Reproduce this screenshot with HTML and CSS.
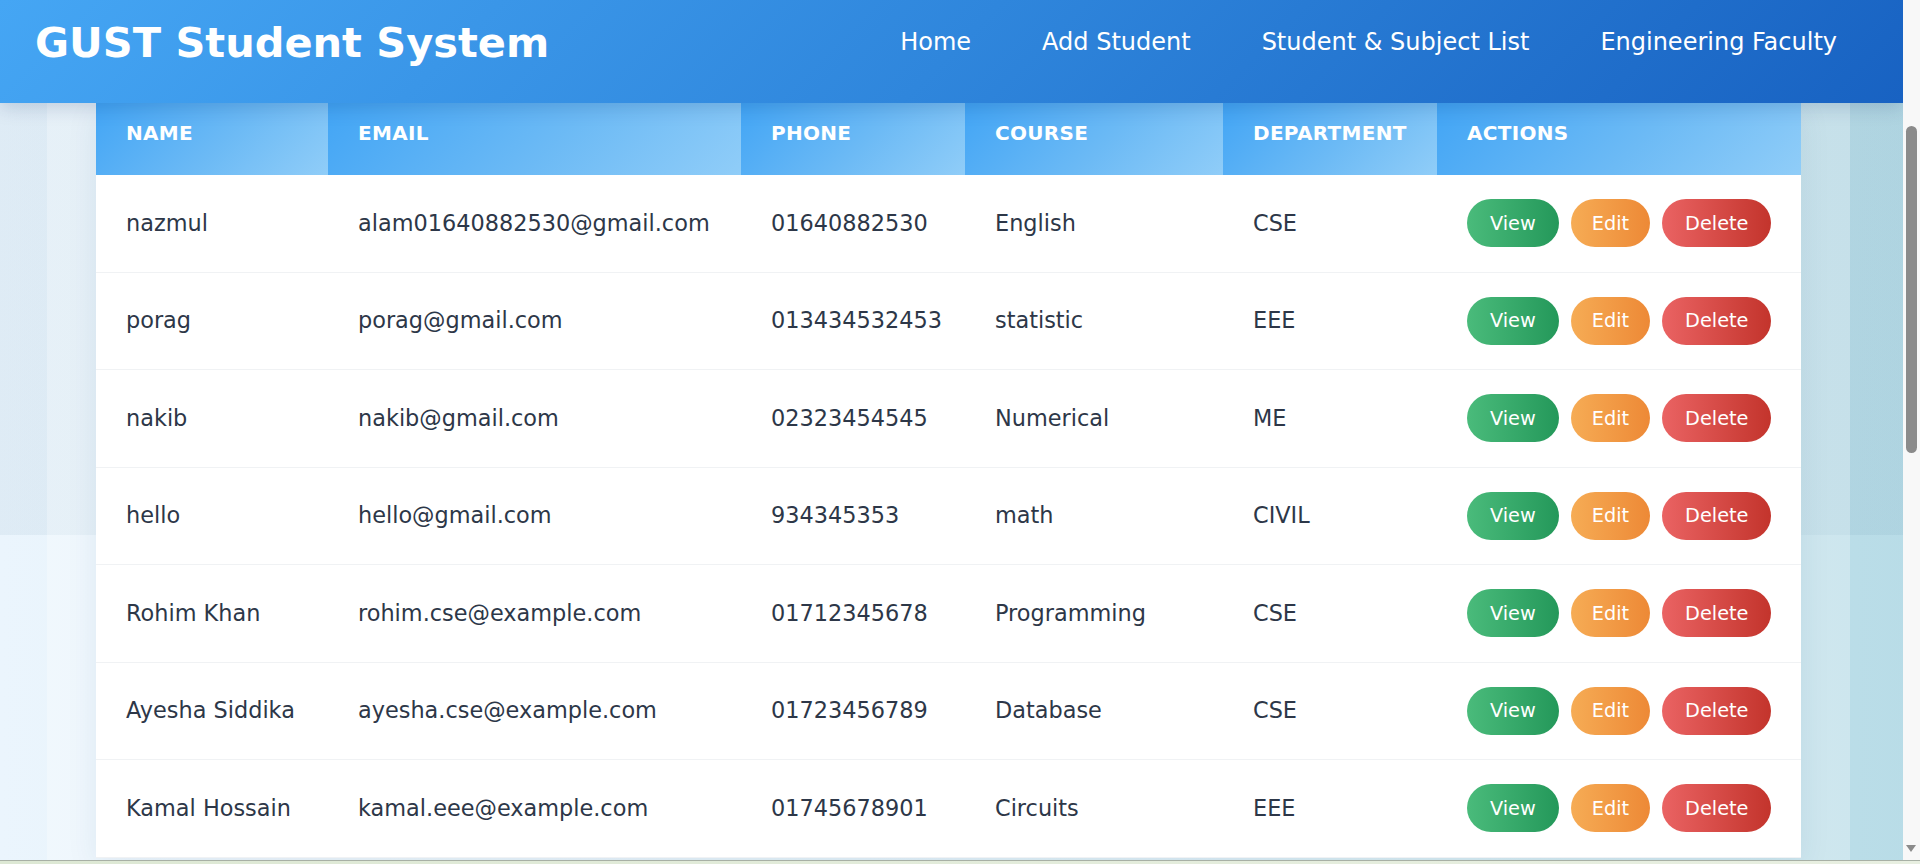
FILE: index.html
```html
<!DOCTYPE html>
<html lang="en">
<head>
<meta charset="utf-8">
<title>GUST Student System</title>
<link rel="stylesheet" href="styles.css">
</head>
<body>
<header class="topbar">
  <h1 class="brand">GUST Student System</h1>
  <nav class="nav">
    <a href="#" class="nav-link">Home</a>
    <a href="#" class="nav-link">Add Student</a>
    <a href="#" class="nav-link">Student &amp; Subject List</a>
    <a href="#" class="nav-link">Engineering Faculty</a>
  </nav>
</header>
<main class="page">
  <section class="panel">
    <table class="students">
      <thead>
        <tr>
          <th class="c-name">Name</th>
          <th class="c-email">Email</th>
          <th class="c-phone">Phone</th>
          <th class="c-course">Course</th>
          <th class="c-dept">Department</th>
          <th class="c-actions">Actions</th>
        </tr>
      </thead>
      <tbody>
        <tr><td>nazmul</td><td>alam01640882530@gmail.com</td><td>01640882530</td><td>English</td><td>CSE</td>
          <td><div class="actions"><a class="btn btn-view" href="#">View</a><a class="btn btn-edit" href="#">Edit</a><a class="btn btn-delete" href="#">Delete</a></div></td></tr>
        <tr><td>porag</td><td>porag@gmail.com</td><td>013434532453</td><td>statistic</td><td>EEE</td>
          <td><div class="actions"><a class="btn btn-view" href="#">View</a><a class="btn btn-edit" href="#">Edit</a><a class="btn btn-delete" href="#">Delete</a></div></td></tr>
        <tr><td>nakib</td><td>nakib@gmail.com</td><td>02323454545</td><td>Numerical</td><td>ME</td>
          <td><div class="actions"><a class="btn btn-view" href="#">View</a><a class="btn btn-edit" href="#">Edit</a><a class="btn btn-delete" href="#">Delete</a></div></td></tr>
        <tr><td>hello</td><td>hello@gmail.com</td><td>934345353</td><td>math</td><td>CIVIL</td>
          <td><div class="actions"><a class="btn btn-view" href="#">View</a><a class="btn btn-edit" href="#">Edit</a><a class="btn btn-delete" href="#">Delete</a></div></td></tr>
        <tr><td>Rohim Khan</td><td>rohim.cse@example.com</td><td>01712345678</td><td>Programming</td><td>CSE</td>
          <td><div class="actions"><a class="btn btn-view" href="#">View</a><a class="btn btn-edit" href="#">Edit</a><a class="btn btn-delete" href="#">Delete</a></div></td></tr>
        <tr><td>Ayesha Siddika</td><td>ayesha.cse@example.com</td><td>01723456789</td><td>Database</td><td>CSE</td>
          <td><div class="actions"><a class="btn btn-view" href="#">View</a><a class="btn btn-edit" href="#">Edit</a><a class="btn btn-delete" href="#">Delete</a></div></td></tr>
        <tr><td>Kamal Hossain</td><td>kamal.eee@example.com</td><td>01745678901</td><td>Circuits</td><td>EEE</td>
          <td><div class="actions"><a class="btn btn-view" href="#">View</a><a class="btn btn-edit" href="#">Edit</a><a class="btn btn-delete" href="#">Delete</a></div></td></tr>
      </tbody>
    </table>
  </section>
</main>
<div class="scrollbar" aria-hidden="true">
  <div class="scrollbar-thumb"></div>
  <div class="scrollbar-arrow"></div>
</div>
<div class="bottom-edge" aria-hidden="true"></div>
</body>
</html>
```
FILE: styles.css
```css
* { box-sizing: border-box; }

html, body { margin: 0; padding: 0; }

body {
  font-family: "DejaVu Sans", "Noto Sans", sans-serif;
  color: #2d3748;
  padding-right: 17px;
  background:
    linear-gradient(rgba(20, 80, 120, 0.06), rgba(20, 80, 120, 0.06)) top left / 100% 535px no-repeat,
    linear-gradient(90deg, #ebf5fd 0%, #d6ebf4 50%, #b8dce7 100%);
  min-height: 100vh;
}

.topbar {
  position: sticky;
  top: 0;
  z-index: 10;
  height: 103px;
  display: flex;
  align-items: center;
  justify-content: space-between;
  padding: 0 66px 18px 35px;
  background: linear-gradient(135deg, #45a6f4 0%, #2f86dc 50%, #1862c2 100%);
  box-shadow: 0 4px 18px rgba(0, 40, 100, 0.18);
}

.brand {
  margin: 0;
  font-size: 41.5px;
  font-weight: 700;
  color: #ffffff;
  line-height: 1.2;
}

.nav {
  display: flex;
  gap: 71px;
}

.nav-link {
  color: #ffffff;
  text-decoration: none;
  font-size: 24px;
  line-height: 1.2;
}

.page {
  padding: 0 53px 40px 47px;
}

.panel {
  background: rgba(255, 255, 255, 0.28);
  padding: 0 49px 40px;
}

.students {
  width: 100%;
  border-collapse: collapse;
  table-layout: fixed;
  background: #ffffff;
  box-shadow: 0 8px 30px rgba(30, 70, 110, 0.08);
}

.students th {
  padding: 18px 30px 30px;
  text-align: left;
  font-size: 20px;
  line-height: 24px;
  font-weight: 700;
  text-transform: uppercase;
  letter-spacing: 0.3px;
  color: #ffffff;
  background: linear-gradient(135deg, #42a5f5 0%, #6cbaf5 55%, #90cdf8 100%);
}

.c-name { width: 232px; }
.c-email { width: 413px; }
.c-phone { width: 224px; }
.c-course { width: 258px; }
.c-dept { width: 214px; }
.c-actions { width: 364px; }

.students td {
  padding: 24.25px 30px;
  font-size: 22.4px;
  line-height: 1.2;
  color: #2d3748;
  border-bottom: 1px solid #f0f2f4;
  vertical-align: middle;
  white-space: nowrap;
}

.actions {
  display: flex;
  gap: 12px;
}

.btn {
  display: inline-flex;
  align-items: center;
  justify-content: center;
  height: 48px;
  padding: 0 23px;
  border-radius: 25px;
  color: #ffffff;
  text-decoration: none;
  font-size: 19.3px;
  font-weight: 500;
}

.btn-edit { padding: 0 21px; }

.btn-view { background: linear-gradient(90deg, #4abb7b 0%, #24985a 100%); }
.btn-edit { background: linear-gradient(90deg, #f6ac55 0%, #ed8936 100%); }
.btn-delete { background: linear-gradient(90deg, #ea6363 0%, #c3342c 100%); }

.scrollbar {
  position: fixed;
  top: 0;
  right: 0;
  width: 17px;
  height: 100vh;
  background: #f8f8f8;
  z-index: 20;
}

.scrollbar-thumb {
  position: absolute;
  top: 126px;
  left: 3px;
  width: 11px;
  height: 327px;
  border-radius: 6px;
  background: #8b8b8b;
}

.scrollbar-arrow {
  position: absolute;
  bottom: 12px;
  left: 3px;
  width: 0;
  height: 0;
  border-left: 5.5px solid transparent;
  border-right: 5.5px solid transparent;
  border-top: 7px solid #8b8b8b;
}

.bottom-edge {
  position: fixed;
  left: 0;
  right: 0;
  bottom: 0;
  height: 4px;
  border-top: 1px solid #a8b0a5;
  background: linear-gradient(90deg, #dde8d4, #e8efe1);
  z-index: 21;
}
```
